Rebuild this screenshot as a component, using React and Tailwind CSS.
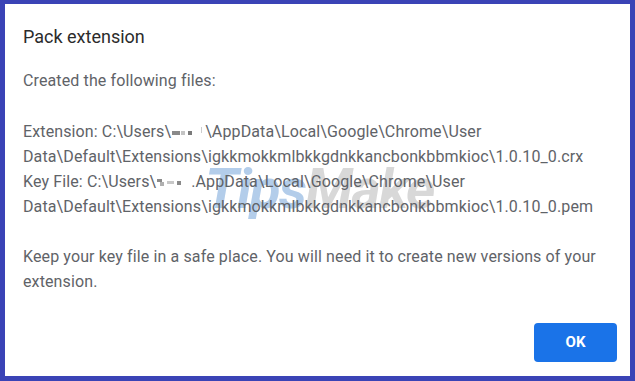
import React from "react";

function Blob({ variant }) {
  if (variant === 2) {
    return (
      <span className="inline-flex items-center gap-[3px] align-middle mx-[1px]">
        <span className="inline-flex flex-col">
          <span className="inline-block w-[5px] h-[3px] bg-[#8a8a8a]" />
          <span className="inline-block w-[4px] h-[4px] ml-[3px] bg-[#b0b0b0]" />
        </span>
        <span className="inline-block w-[7px] h-[3px] bg-[#c8c8c8]" />
        <span className="inline-block w-[4px] h-[4px] bg-[#8a8a8a]" />
        <span className="inline-block w-[6px]" />
      </span>
    );
  }
  return (
    <span className="inline-flex items-center gap-[1px] align-middle mx-[1px]">
      <span className="inline-block w-[8px] h-[4px] bg-[#8a8a8a]" />
      <span className="inline-block w-[4px] h-[4px] bg-[#c4c4c4]" />
      <span className="inline-block w-[4px] h-[4px] ml-[2px] bg-[#7a7a7a]" />
      <span className="inline-block w-[7px]" />
      <span className="inline-block w-[1px] h-[6px] -mt-[6px] bg-[#cccccc]" />
      <span className="inline-block w-[1px]" />
    </span>
  );
}

export default function App() {
  return (
    <div className="w-[635px] h-[381px] bg-[#3a43b6] pt-[4px] pb-[5px] px-[5px]">
      <div
        className="relative w-full h-full bg-white flex flex-col pl-[18px] pr-[13px] pt-[21px] pb-[14px]"
        style={{ fontFamily: "Roboto, 'Liberation Sans', sans-serif" }}
      >
        <div className="absolute left-[200px] top-[157px] text-[56px] font-bold italic leading-none tracking-[-1.5px] select-none">
          <span className="text-[#b3cdea]">Tips</span>
          <span className="text-[#d8d8d8]">Make</span>
        </div>
        <div className="relative text-[18px] leading-[24px] text-[#2b2b2b]">Pack extension</div>
        <div className="relative mt-[19px] text-[16px] tracking-[0.12px] leading-[25px] text-[#5f6368]">
          <div>Created the following files:</div>
          <div className="mt-[26px]">
            <div>
              Extension: C:\Users\<Blob />\AppData\Local\Google\Chrome\User
            </div>
            <div>Data\Default\Extensions\igkkmokkmlbkkgdnkkancbonkbbmkioc\1.0.10_0.crx</div>
            <div>
              Key File: C:\Users\<Blob variant={2} />.AppData\Local\Google\Chrome\User
            </div>
            <div>Data\Default\Extensions\igkkmokkmlbkkgdnkkancbonkbbmkioc\1.0.10_0.pem</div>
          </div>
          <div className="mt-[25px] pr-[4px]">
            Keep your key file in a safe place. You will need it to create new versions of your extension.
          </div>
        </div>
        <div className="mt-auto flex justify-end">
          <button className="w-[83px] h-[39px] rounded-[4px] bg-[#1a73e8] text-white text-[15px] font-bold">
            OK
          </button>
        </div>
      </div>
    </div>
  );
}
